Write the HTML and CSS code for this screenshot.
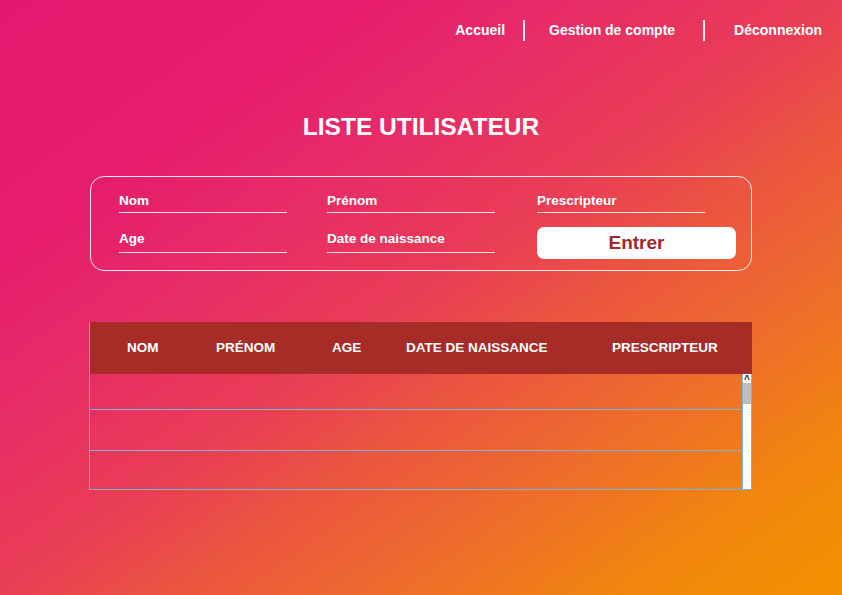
FILE: index.html
```html
<!DOCTYPE html>
<html lang="fr">
<head>
<meta charset="utf-8">
<title>Liste utilisateur</title>
<link rel="stylesheet" href="styles.css">
</head>
<body>
<div class="page">
  <nav class="nav">
    <a class="nav-link" href="#">Accueil</a>
    <span class="nav-sep sep-1"></span>
    <a class="nav-link" href="#">Gestion de compte</a>
    <span class="nav-sep sep-2"></span>
    <a class="nav-link" href="#">Déconnexion</a>
  </nav>

  <h1 class="title">LISTE UTILISATEUR</h1>

  <form class="search">
    <div class="field row-1"><span class="label">Nom</span></div>
    <div class="field row-1"><span class="label">Prénom</span></div>
    <div class="field row-1"><span class="label">Prescripteur</span></div>
    <div class="field row-2"><span class="label">Age</span></div>
    <div class="field row-2"><span class="label">Date de naissance</span></div>
    <button class="btn" type="button">Entrer</button>
  </form>

  <div class="table">
    <div class="thead">
      <span class="th">NOM</span>
      <span class="th">PRÉNOM</span>
      <span class="th">AGE</span>
      <span class="th">DATE DE NAISSANCE</span>
      <span class="th">PRESCRIPTEUR</span>
    </div>
    <div class="tbody">
      <div class="rows">
        <div class="tr"></div>
        <div class="tr"></div>
        <div class="tr"></div>
      </div>
      <div class="scrollbar">
        <div class="scroll-arrow">^</div>
        <div class="scroll-thumb"></div>
      </div>
    </div>
  </div>
</div>
</body>
</html>
```

FILE: styles.css
```css
html, body {
  margin: 0;
  padding: 0;
}

body {
  width: 842px;
  height: 595px;
  overflow: hidden;
  font-family: "Liberation Sans", Arial, Helvetica, sans-serif;
  color: #fff;
  background: linear-gradient(to bottom right,
    #e5186f 0%,
    #e61d6c 22%,
    #e7296a 32%,
    #e93e55 50%,
    #eb5540 60%,
    #ee6e2a 74%,
    #f0850f 86%,
    #f39200 100%);
}

.page {
  width: 842px;
  height: 595px;
}

/* navigation */
.nav {
  display: flex;
  justify-content: flex-end;
  align-items: center;
  padding: 20px 20px 0 0;
  height: 21px;
}

.nav-link {
  color: #fff;
  text-decoration: none;
  font-weight: bold;
  font-size: 14px;
  line-height: 21px;
}

.nav-sep {
  width: 2px;
  height: 21px;
  background: rgba(255, 255, 255, 0.9);
}

.sep-1 { margin: 0 24px 0 18px; }
.sep-2 { margin: 0 29px 0 28px; }

/* title */
.title {
  margin: 72px 0 0;
  text-align: center;
  font-size: 24.5px;
  line-height: 28px;
  font-weight: bold;
}

/* search form */
.search {
  margin: 35px 90px 0;
  border: 1px solid rgba(255, 255, 255, 0.9);
  border-radius: 14px;
  padding: 16px 0 11px 28px;
  display: grid;
  grid-template-columns: 208px 210px 200px;
  grid-template-rows: auto 32px;
  row-gap: 14px;
}

.field {
  width: 168px;
  border-bottom: 1px solid rgba(255, 255, 255, 0.85);
  padding-bottom: 3px;
}

.field.row-2 {
  align-self: start;
  margin-top: 4px;
  padding-bottom: 5px;
}

.label {
  display: block;
  font-size: 13.5px;
  font-weight: bold;
  line-height: 16px;
}

.btn {
  width: 199px;
  height: 32px;
  border: none;
  border-radius: 7px;
  background: #fff;
  color: #a4262c;
  font-family: inherit;
  font-weight: bold;
  font-size: 19px;
  padding: 0;
  line-height: 32px;
}

/* table */
.table {
  margin: 51px 90px 0 89px;
  border: 1px solid #7db4d6;
  border-top: none;
  border-right: none;
}

.thead {
  height: 52px;
  background: #a72b26;
  display: grid;
  grid-template-columns: 89px 116px 74px 206px auto;
  align-items: center;
  padding-left: 37px;
}

.th {
  font-size: 13.5px;
  font-weight: bold;
  line-height: 16px;
  white-space: nowrap;
}

.tbody {
  display: flex;
}

.rows {
  flex: 1;
}

.tr {
  height: 35px;
  border-bottom: 1px solid #7db4d6;
}

.tr:nth-child(2) { height: 40px; }
.tr:nth-child(3) { height: 38px; border-bottom: none; }

.scrollbar {
  width: 8px;
  background: #fff;
  border-left: 1px solid #7db4d6;
  border-right: 1px solid #7db4d6;
  display: flex;
  flex-direction: column;
}

.scroll-arrow {
  height: 9px;
  font-size: 10px;
  line-height: 12px;
  font-weight: bold;
  color: #222;
  text-align: center;
  background: #fff;
}

.scroll-thumb {
  height: 21px;
  background: #bdbdbd;
}
```
